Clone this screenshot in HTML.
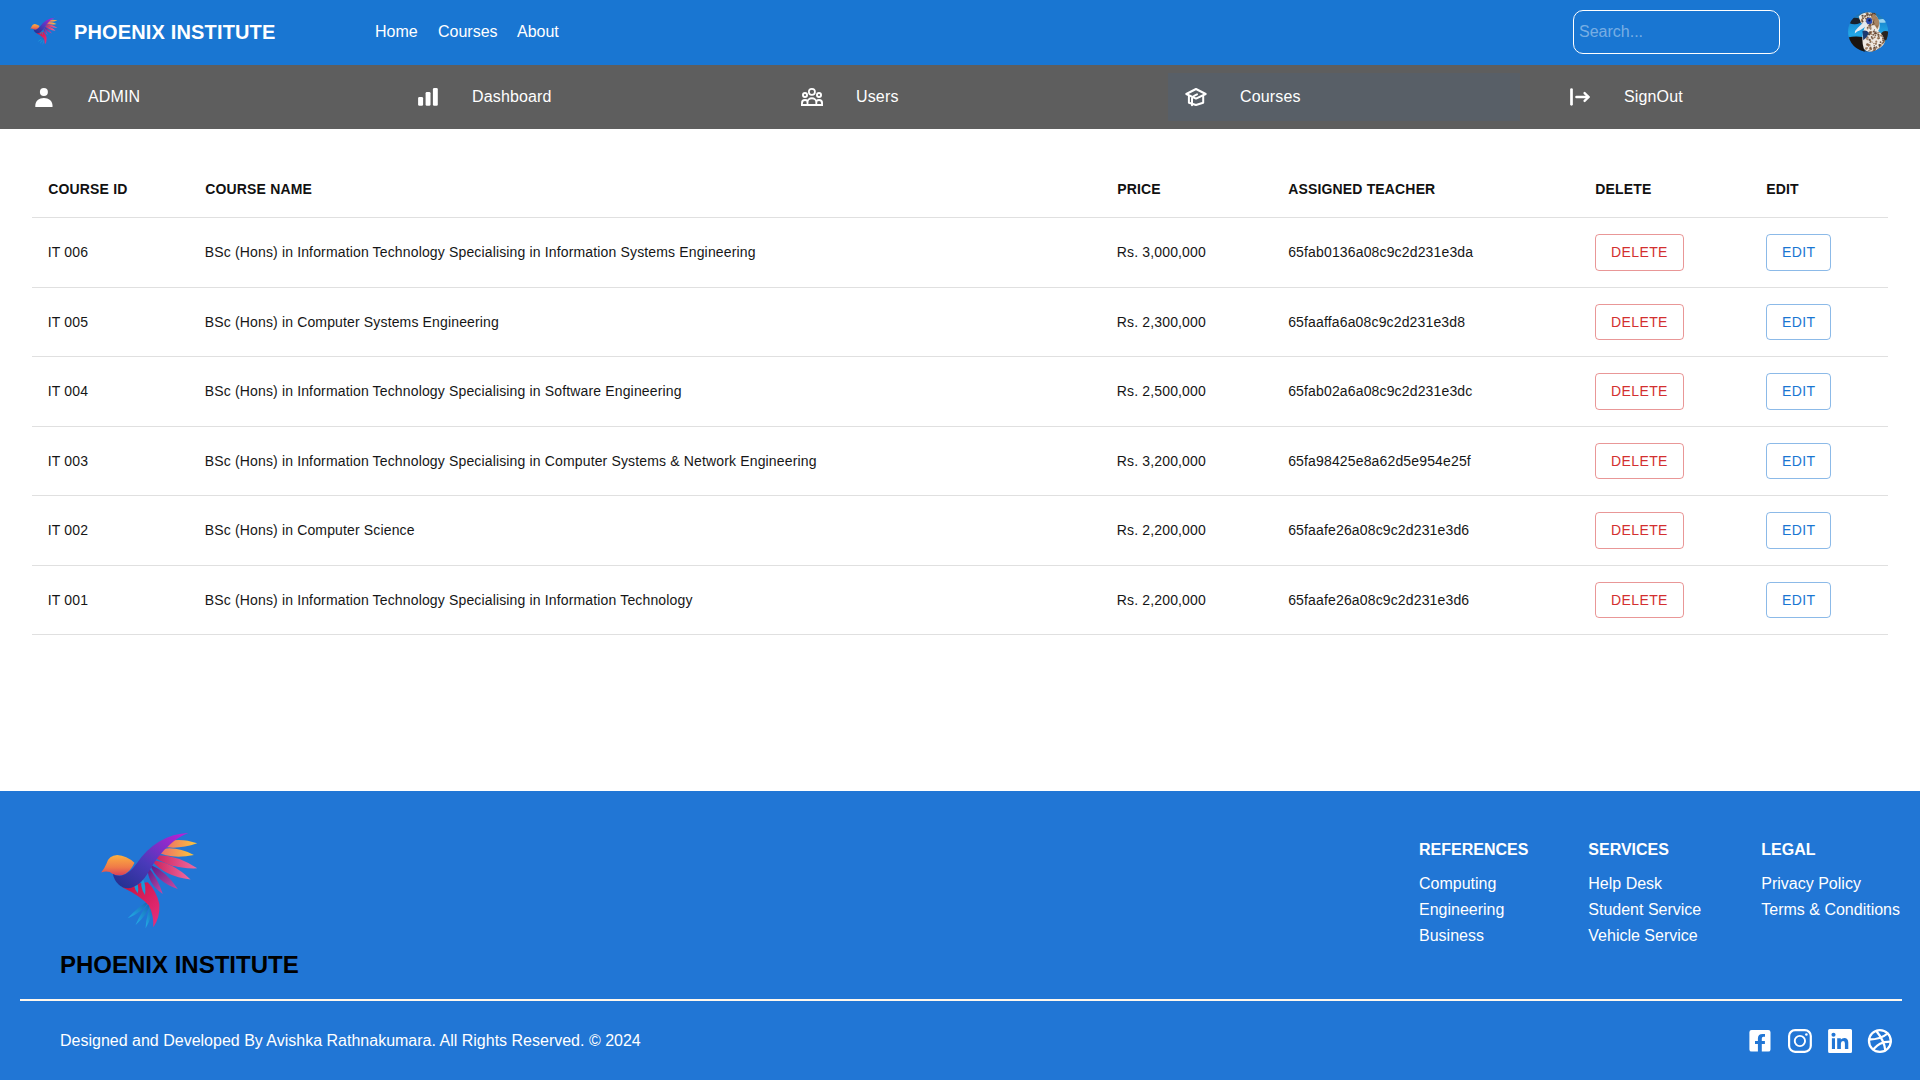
<!DOCTYPE html>
<html>
<head>
<meta charset="utf-8">
<style>
*{box-sizing:border-box;margin:0;padding:0}
html,body{width:1920px;height:1080px;overflow:hidden;background:#fff;font-family:"Liberation Sans",sans-serif;position:relative}
.abs{position:absolute;white-space:nowrap}
#hdr{position:absolute;left:0;top:0;width:1920px;height:65px;background:#1976d2}
#title{left:74px;top:17.6px;font-size:20px;font-weight:bold;color:#fff;letter-spacing:0.15px;line-height:28px}
.nav{top:23px;font-size:16px;color:#fff;line-height:18px}
#search{position:absolute;left:1573px;top:10px;width:207px;height:44px;border:1.5px solid #fff;border-radius:10px}
#search span{position:absolute;left:5px;top:11px;font-size:16px;line-height:20px;color:rgba(255,255,255,0.42)}
#bar{position:absolute;left:0;top:65px;width:1920px;height:64px;background:#5e5e5e}
.item{position:absolute;top:8px;width:352px;height:48px}
.item.sel{background:#585f67}
.item .t{position:absolute;left:72px;top:14px;font-size:16px;line-height:20px;color:#fff;letter-spacing:0.15px}
.item svg{position:absolute;left:16px;top:12px}
#tbl{position:absolute;left:32px;top:161px;width:1856px}
.row{position:relative;height:69.5px;border-bottom:1px solid #e0e0e0}
.row.h{height:57px}
.c{position:absolute;top:0;font-size:14px;letter-spacing:0.15px;color:#161616;line-height:20px;white-space:nowrap}
.h .c{font-weight:bold;line-height:24px;top:16px;color:#111}
.b .c{top:24.25px}
.btn{position:absolute;top:16px;height:36.5px;border:1px solid;border-radius:4px;font-size:14px;letter-spacing:0.4px;line-height:24px;padding:5.25px 15px;text-align:center}
.del{left:1563px;width:88.9px;color:#d32f2f;border-color:rgba(211,47,47,0.5)}
.edt{left:1734px;width:64.6px;color:#1976d2;border-color:rgba(25,118,210,0.5)}
#ftr{position:absolute;left:0;top:791px;width:1920px;height:289px;background:#2176d5}
.fh{font-size:16px;font-weight:bold;color:#fff;line-height:20px}
.fl{font-size:16px;color:#fff;line-height:20px}
</style>
</head>
<body>
<svg width="0" height="0" style="position:absolute"><symbol id="bird" viewBox="0 0 1080 1080"><defs>
<linearGradient id="gHead" x1="0" y1="0" x2="0" y2="1"><stop offset="0" stop-color="#fbb040"/><stop offset="0.6" stop-color="#f07a48"/><stop offset="1" stop-color="#d8405a"/></linearGradient>
<linearGradient id="gNeck" x1="0" y1="1" x2="1" y2="0"><stop offset="0" stop-color="#1f2f8a"/><stop offset="0.45" stop-color="#4a3aba"/><stop offset="1" stop-color="#c21fd6"/></linearGradient>
<linearGradient id="gW1" x1="0" y1="0" x2="1" y2="0"><stop offset="0" stop-color="#e85a70"/><stop offset="1" stop-color="#fcc83c"/></linearGradient>
<linearGradient id="gW2" x1="0" y1="0" x2="1" y2="0"><stop offset="0" stop-color="#c8205a"/><stop offset="1" stop-color="#f06aa0"/></linearGradient>
<linearGradient id="gW3" x1="0" y1="0" x2="1" y2="1"><stop offset="0" stop-color="#5a1a8a"/><stop offset="1" stop-color="#c84aa0"/></linearGradient>
<linearGradient id="gTail" x1="0" y1="0" x2="1" y2="1"><stop offset="0" stop-color="#c8103c"/><stop offset="1" stop-color="#e83080"/></linearGradient>
<linearGradient id="gBlue" x1="1" y1="0" x2="0" y2="1"><stop offset="0" stop-color="#1560b0"/><stop offset="1" stop-color="#22b0e8"/></linearGradient>
</defs><path fill="url(#gW3)" d="M520,420 Q511,569 655,665 Q607,516 520,420Z"/><path fill="url(#gW3)" d="M540,400 Q600,559 790,620 Q686,461 540,400Z"/><path fill="url(#gW2)" d="M550,360 Q674,511 905,535 Q741,376 550,360Z"/><path fill="url(#gW2)" d="M560,320 Q722,444 965,435 Q763,300 560,320Z"/><path fill="url(#gW1)" d="M580,280 Q733,360 935,315 Q748,216 580,280Z"/><path fill="url(#gW1)" d="M610,230 Q773,276 965,210 Q765,141 610,230Z"/><path fill="url(#gBlue)" d="M540,720 Q436,777 340,885 Q477,827 540,720Z"/><path fill="url(#gBlue)" d="M550,730 Q467,814 410,945 Q524,851 550,730Z"/><path fill="url(#gBlue)" d="M565,740 Q507,838 500,975 Q572,856 565,740Z"/><path fill="url(#gTail)" d="M290,605 Q420,570 520,560 Q600,640 625,760 Q630,880 570,965 Q575,860 530,770 Q450,680 290,605Z"/><path fill="#1a9ad8" d="M410,540 Q380,601 430,660 Q445,590 410,540Z"/><path fill="#1a9ad8" d="M470,520 Q442,596 495,675 Q509,585 470,520Z"/><path fill="url(#gHead)" d="M100,472 Q130,440 150,390 Q170,318 245,315 Q330,320 400,385 Q370,455 310,490 Q250,510 205,485 Q165,452 100,472Z"/><path fill="url(#gNeck)" d="M205,485 Q235,605 345,615 Q455,600 535,455 Q610,315 720,220 Q800,150 885,118 Q750,122 620,195 Q505,265 425,385 Q355,485 285,500 Q235,505 205,485Z"/></symbol></svg>
<div id="hdr">
  <svg class="abs" style="left:27px;top:14px" width="34" height="34"><use href="#bird" width="34" height="34"/></svg>
  <div id="title" class="abs">PHOENIX INSTITUTE</div>
  <div class="abs nav" style="left:375px">Home</div>
  <div class="abs nav" style="left:438px">Courses</div>
  <div class="abs nav" style="left:517px">About</div>
  <div id="search"><span>Search...</span></div>
  <svg class="abs" style="left:1843px;top:7px" width="50" height="50" viewBox="0 0 1080 1080">
<defs><clipPath id="av"><circle cx="542" cy="535" r="433"/></clipPath>
<linearGradient id="avbg" x1="0" y1="0" x2="0" y2="1"><stop offset="0" stop-color="#2a5a8a"/><stop offset="0.3" stop-color="#1a8ad0"/><stop offset="0.55" stop-color="#22a8e8"/><stop offset="0.75" stop-color="#1a70b0"/><stop offset="1" stop-color="#2a3a50"/></linearGradient>
</defs>
<g clip-path="url(#av)">
<rect x="0" y="0" width="1080" height="1080" fill="url(#avbg)"/>
<ellipse cx="250" cy="300" rx="150" ry="70" fill="#18202c"/>
<ellipse cx="850" cy="300" rx="90" ry="40" fill="#9ad4f0"/>
<ellipse cx="920" cy="620" rx="110" ry="100" fill="#2a2420"/>
<path d="M100,660 Q260,620 420,650 Q470,800 470,1000 L100,1000Z" fill="#1a1410"/>
<path d="M340,200 Q430,100 600,120 Q770,160 790,380 Q800,470 760,520 Q880,600 900,760 Q880,930 700,980 Q520,990 450,900 Q400,760 430,560 Q450,480 470,430 Q360,330 340,200Z" fill="#efe9e2"/>
<path d="M580,130 Q740,160 780,300 Q790,420 740,480 Q660,380 620,250Z" fill="#a88462"/>
<circle cx="555" cy="241" r="21" fill="#6a4a30" opacity="0.85"/><circle cx="695" cy="901" r="15" fill="#6a4a30" opacity="0.85"/><circle cx="614" cy="171" r="13" fill="#a07a58" opacity="0.85"/><circle cx="695" cy="164" r="20" fill="#6a4a30" opacity="0.85"/><circle cx="458" cy="212" r="16" fill="#8a6446" opacity="0.85"/><circle cx="481" cy="195" r="22" fill="#5a3a28" opacity="0.85"/><circle cx="412" cy="289" r="22" fill="#a07a58" opacity="0.85"/><circle cx="514" cy="266" r="23" fill="#6a4a30" opacity="0.85"/><circle cx="690" cy="567" r="24" fill="#a07a58" opacity="0.85"/><circle cx="644" cy="144" r="21" fill="#5a3a28" opacity="0.85"/><circle cx="689" cy="872" r="16" fill="#3a2a20" opacity="0.85"/><circle cx="701" cy="615" r="18" fill="#6a4a30" opacity="0.85"/><circle cx="759" cy="673" r="26" fill="#a07a58" opacity="0.85"/><circle cx="534" cy="446" r="21" fill="#6a4a30" opacity="0.85"/><circle cx="710" cy="540" r="15" fill="#3a2a20" opacity="0.85"/><circle cx="450" cy="325" r="17" fill="#a07a58" opacity="0.85"/><circle cx="677" cy="879" r="23" fill="#5a3a28" opacity="0.85"/><circle cx="530" cy="471" r="17" fill="#a07a58" opacity="0.85"/><circle cx="475" cy="312" r="15" fill="#a07a58" opacity="0.85"/><circle cx="532" cy="237" r="19" fill="#5a3a28" opacity="0.85"/><circle cx="686" cy="939" r="22" fill="#5a3a28" opacity="0.85"/><circle cx="748" cy="597" r="18" fill="#a07a58" opacity="0.85"/><circle cx="493" cy="251" r="17" fill="#6a4a30" opacity="0.85"/><circle cx="670" cy="936" r="21" fill="#6a4a30" opacity="0.85"/><circle cx="852" cy="644" r="14" fill="#3a2a20" opacity="0.85"/><circle cx="636" cy="210" r="19" fill="#a07a58" opacity="0.85"/><circle cx="639" cy="381" r="14" fill="#3a2a20" opacity="0.85"/><circle cx="754" cy="559" r="15" fill="#5a3a28" opacity="0.85"/><circle cx="575" cy="710" r="25" fill="#5a3a28" opacity="0.85"/><circle cx="541" cy="669" r="13" fill="#3a2a20" opacity="0.85"/><circle cx="660" cy="900" r="17" fill="#8a6446" opacity="0.85"/><circle cx="668" cy="788" r="17" fill="#8a6446" opacity="0.85"/><circle cx="711" cy="796" r="23" fill="#8a6446" opacity="0.85"/><circle cx="815" cy="822" r="22" fill="#8a6446" opacity="0.85"/><circle cx="485" cy="636" r="17" fill="#3a2a20" opacity="0.85"/><circle cx="499" cy="307" r="15" fill="#8a6446" opacity="0.85"/><circle cx="641" cy="967" r="21" fill="#6a4a30" opacity="0.85"/><circle cx="639" cy="678" r="23" fill="#6a4a30" opacity="0.85"/><circle cx="590" cy="729" r="15" fill="#8a6446" opacity="0.85"/><circle cx="614" cy="663" r="13" fill="#a07a58" opacity="0.85"/><circle cx="630" cy="757" r="13" fill="#8a6446" opacity="0.85"/><circle cx="472" cy="221" r="14" fill="#a07a58" opacity="0.85"/><circle cx="735" cy="415" r="20" fill="#8a6446" opacity="0.85"/><circle cx="674" cy="836" r="13" fill="#3a2a20" opacity="0.85"/><circle cx="865" cy="686" r="23" fill="#5a3a28" opacity="0.85"/><circle cx="607" cy="908" r="19" fill="#5a3a28" opacity="0.85"/><circle cx="851" cy="786" r="21" fill="#8a6446" opacity="0.85"/><circle cx="772" cy="594" r="17" fill="#5a3a28" opacity="0.85"/><circle cx="667" cy="530" r="23" fill="#5a3a28" opacity="0.85"/><circle cx="411" cy="276" r="13" fill="#6a4a30" opacity="0.85"/><circle cx="654" cy="599" r="23" fill="#6a4a30" opacity="0.85"/><circle cx="619" cy="643" r="19" fill="#5a3a28" opacity="0.85"/><circle cx="488" cy="351" r="19" fill="#a07a58" opacity="0.85"/><circle cx="654" cy="325" r="19" fill="#3a2a20" opacity="0.85"/><circle cx="605" cy="451" r="16" fill="#8a6446" opacity="0.85"/><circle cx="611" cy="295" r="16" fill="#6a4a30" opacity="0.85"/><circle cx="767" cy="684" r="14" fill="#8a6446" opacity="0.85"/><circle cx="643" cy="971" r="24" fill="#8a6446" opacity="0.85"/><circle cx="598" cy="477" r="17" fill="#6a4a30" opacity="0.85"/><circle cx="679" cy="493" r="12" fill="#3a2a20" opacity="0.85"/><circle cx="659" cy="367" r="25" fill="#6a4a30" opacity="0.85"/><circle cx="523" cy="144" r="23" fill="#3a2a20" opacity="0.85"/><circle cx="788" cy="823" r="24" fill="#3a2a20" opacity="0.85"/><circle cx="599" cy="577" r="19" fill="#a07a58" opacity="0.85"/><circle cx="610" cy="173" r="25" fill="#6a4a30" opacity="0.85"/><circle cx="563" cy="591" r="25" fill="#3a2a20" opacity="0.85"/><circle cx="763" cy="926" r="26" fill="#3a2a20" opacity="0.85"/><circle cx="407" cy="286" r="16" fill="#3a2a20" opacity="0.85"/><circle cx="667" cy="289" r="18" fill="#8a6446" opacity="0.85"/><circle cx="526" cy="809" r="26" fill="#6a4a30" opacity="0.85"/><circle cx="678" cy="275" r="19" fill="#a07a58" opacity="0.85"/><circle cx="613" cy="541" r="24" fill="#a07a58" opacity="0.85"/><circle cx="496" cy="310" r="15" fill="#8a6446" opacity="0.85"/><circle cx="599" cy="412" r="13" fill="#8a6446" opacity="0.85"/><circle cx="586" cy="550" r="26" fill="#5a3a28" opacity="0.85"/><circle cx="511" cy="365" r="18" fill="#8a6446" opacity="0.85"/><circle cx="577" cy="396" r="26" fill="#3a2a20" opacity="0.85"/><circle cx="547" cy="420" r="12" fill="#a07a58" opacity="0.85"/><circle cx="425" cy="353" r="21" fill="#8a6446" opacity="0.85"/><circle cx="523" cy="188" r="18" fill="#6a4a30" opacity="0.85"/><circle cx="593" cy="371" r="21" fill="#6a4a30" opacity="0.85"/><circle cx="696" cy="570" r="23" fill="#5a3a28" opacity="0.85"/><circle cx="590" cy="394" r="26" fill="#8a6446" opacity="0.85"/><circle cx="533" cy="648" r="14" fill="#5a3a28" opacity="0.85"/><circle cx="719" cy="748" r="23" fill="#8a6446" opacity="0.85"/><circle cx="871" cy="765" r="20" fill="#6a4a30" opacity="0.85"/><circle cx="826" cy="618" r="24" fill="#8a6446" opacity="0.85"/><circle cx="724" cy="945" r="17" fill="#a07a58" opacity="0.85"/><circle cx="682" cy="656" r="21" fill="#8a6446" opacity="0.85"/><circle cx="811" cy="761" r="19" fill="#5a3a28" opacity="0.85"/><circle cx="817" cy="846" r="15" fill="#8a6446" opacity="0.85"/><circle cx="505" cy="675" r="18" fill="#a07a58" opacity="0.85"/><circle cx="535" cy="151" r="21" fill="#8a6446" opacity="0.85"/><circle cx="422" cy="238" r="16" fill="#3a2a20" opacity="0.85"/><circle cx="715" cy="226" r="19" fill="#a07a58" opacity="0.85"/><circle cx="525" cy="695" r="22" fill="#a07a58" opacity="0.85"/><circle cx="537" cy="559" r="19" fill="#a07a58" opacity="0.85"/><circle cx="677" cy="381" r="13" fill="#a07a58" opacity="0.85"/><circle cx="623" cy="344" r="15" fill="#8a6446" opacity="0.85"/><circle cx="420" cy="189" r="22" fill="#3a2a20" opacity="0.85"/><circle cx="859" cy="722" r="15" fill="#a07a58" opacity="0.85"/><circle cx="593" cy="248" r="25" fill="#a07a58" opacity="0.85"/><circle cx="599" cy="743" r="18" fill="#a07a58" opacity="0.85"/><circle cx="551" cy="841" r="12" fill="#3a2a20" opacity="0.85"/><circle cx="880" cy="730" r="25" fill="#3a2a20" opacity="0.85"/><circle cx="517" cy="167" r="17" fill="#5a3a28" opacity="0.85"/><circle cx="788" cy="853" r="16" fill="#6a4a30" opacity="0.85"/><circle cx="523" cy="555" r="15" fill="#3a2a20" opacity="0.85"/><circle cx="596" cy="872" r="20" fill="#8a6446" opacity="0.85"/><circle cx="786" cy="671" r="16" fill="#6a4a30" opacity="0.85"/><circle cx="532" cy="332" r="22" fill="#3a2a20" opacity="0.85"/><circle cx="599" cy="318" r="19" fill="#a07a58" opacity="0.85"/><circle cx="445" cy="670" r="13" fill="#5a3a28" opacity="0.85"/><circle cx="499" cy="898" r="26" fill="#a07a58" opacity="0.85"/><circle cx="611" cy="587" r="15" fill="#8a6446" opacity="0.85"/><circle cx="565" cy="189" r="15" fill="#3a2a20" opacity="0.85"/><circle cx="587" cy="759" r="15" fill="#3a2a20" opacity="0.85"/><circle cx="563" cy="164" r="16" fill="#3a2a20" opacity="0.85"/><circle cx="720" cy="861" r="15" fill="#3a2a20" opacity="0.85"/><circle cx="548" cy="818" r="26" fill="#8a6446" opacity="0.85"/><circle cx="591" cy="916" r="24" fill="#a07a58" opacity="0.85"/><circle cx="439" cy="244" r="19" fill="#6a4a30" opacity="0.85"/><circle cx="888" cy="738" r="21" fill="#a07a58" opacity="0.85"/><circle cx="687" cy="143" r="22" fill="#8a6446" opacity="0.85"/><circle cx="718" cy="570" r="18" fill="#6a4a30" opacity="0.85"/><circle cx="434" cy="371" r="25" fill="#8a6446" opacity="0.85"/><circle cx="590" cy="305" r="20" fill="#6a4a30" opacity="0.85"/><circle cx="670" cy="977" r="16" fill="#3a2a20" opacity="0.85"/><circle cx="728" cy="879" r="19" fill="#8a6446" opacity="0.85"/><circle cx="675" cy="135" r="18" fill="#3a2a20" opacity="0.85"/><circle cx="410" cy="279" r="24" fill="#a07a58" opacity="0.85"/><circle cx="424" cy="308" r="18" fill="#3a2a20" opacity="0.85"/><circle cx="502" cy="140" r="17" fill="#a07a58" opacity="0.85"/><circle cx="576" cy="455" r="12" fill="#3a2a20" opacity="0.85"/><circle cx="779" cy="549" r="15" fill="#8a6446" opacity="0.85"/><circle cx="548" cy="823" r="15" fill="#8a6446" opacity="0.85"/><circle cx="523" cy="884" r="14" fill="#5a3a28" opacity="0.85"/><circle cx="648" cy="273" r="15" fill="#a07a58" opacity="0.85"/><circle cx="701" cy="912" r="13" fill="#6a4a30" opacity="0.85"/><circle cx="592" cy="891" r="24" fill="#6a4a30" opacity="0.85"/><circle cx="558" cy="271" r="25" fill="#a07a58" opacity="0.85"/><circle cx="584" cy="435" r="17" fill="#8a6446" opacity="0.85"/><circle cx="439" cy="178" r="13" fill="#a07a58" opacity="0.85"/><circle cx="573" cy="825" r="24" fill="#a07a58" opacity="0.85"/><circle cx="486" cy="581" r="18" fill="#3a2a20" opacity="0.85"/><circle cx="577" cy="890" r="12" fill="#a07a58" opacity="0.85"/><circle cx="514" cy="654" r="18" fill="#a07a58" opacity="0.85"/><circle cx="784" cy="892" r="17" fill="#3a2a20" opacity="0.85"/><circle cx="561" cy="940" r="13" fill="#3a2a20" opacity="0.85"/><circle cx="770" cy="628" r="23" fill="#6a4a30" opacity="0.85"/><circle cx="393" cy="313" r="19" fill="#a07a58" opacity="0.85"/>
<ellipse cx="565" cy="300" rx="65" ry="70" fill="#2848b0"/>
<ellipse cx="570" cy="290" rx="25" ry="25" fill="#101830"/>
<path d="M470,290 Q400,380 320,450 Q250,510 255,570 Q300,520 370,500 Q460,450 530,370Z" fill="#e4eaf0"/>
<path d="M420,520 Q500,480 560,560 Q520,660 440,720Z" fill="#1c3a70"/>
</g>
</svg>
</div>
<div id="bar">
  <div class="item" style="left:16px"><span class="t">ADMIN</span></div>
  <div class="item" style="left:400px"><span class="t">Dashboard</span></div>
  <div class="item" style="left:784px"><span class="t">Users</span></div>
  <div class="item sel" style="left:1168px"><span class="t">Courses</span></div>
  <div class="item" style="left:1552px"><span class="t">SignOut</span></div>
<svg style="position:absolute;left:0;top:0" width="1920" height="64" viewBox="0 65 1920 64" fill="#fff">
<circle cx="43.9" cy="92.1" r="4"/><path d="M35.3,107 V105.5 C35.3,101 39,97.9 43.9,97.9 C48.8,97.9 52.5,101 52.5,105.5 V107 Z"/>
<rect x="418.1" y="96.9" width="5" height="8.9" rx="1.3"/><rect x="425.6" y="92" width="4.9" height="13.8" rx="1.3"/><rect x="432.9" y="88.1" width="4.9" height="17.7" rx="1.3"/>
<g>
<circle cx="811.9" cy="91.8" r="3.05" fill="none" stroke="#fff" stroke-width="1.75"/>
<circle cx="805" cy="95" r="2.05" fill="none" stroke="#fff" stroke-width="1.9"/>
<circle cx="819" cy="95" r="2.05" fill="none" stroke="#fff" stroke-width="1.9"/>
<path d="M801,106 V103.2 A4,4.1 0 0 1 809,103.2 V106Z"/><path fill="#5e5e5e" d="M802.9,104 V103.2 A2.1,2.2 0 0 1 807.1,103.2 V104Z"/>
<path d="M815,106 V103.2 A4,4.1 0 0 1 823,103.2 V106Z"/><path fill="#5e5e5e" d="M816.9,104 V103.2 A2.1,2.2 0 0 1 821.1,103.2 V104Z"/>
<path d="M806.6,106 V102.2 A5.3,5 0 0 1 817.2,102.2 V106Z"/><path fill="#5e5e5e" d="M808.4,104 V102.6 A3.5,3.3 0 0 1 815.4,102.6 V104Z"/>
<rect x="801" y="104" width="22" height="2"/>
</g>
<g fill="none" stroke="#fff" stroke-width="2" stroke-linejoin="round" stroke-linecap="round">
<path d="M1196,89 L1186.3,94 L1196,98.6 L1205.7,94 Z"/>
<path d="M1188.9,96.3 V102.7 L1196,105 L1203.2,102.7 V96.3"/>
<path d="M1197,94.3 Q1192,96.5 1192,98.5 V105.3"/>
</g>
<g fill="none" stroke="#fff" stroke-linecap="round" stroke-linejoin="round">
<path d="M1571.5,89.6 V104.3" stroke-width="2.7"/>
<path d="M1576.4,97 H1588.3" stroke-width="2.4"/>
<path d="M1584.6,93.1 L1588.6,97 L1584.6,100.9" stroke-width="2.4"/>
</g>
</svg>
</div>
<div id="tbl">
<div class="row h"><div class="c" style="left:16.3px">COURSE ID</div><div class="c" style="left:173.3px">COURSE NAME</div><div class="c" style="left:1085.3px">PRICE</div><div class="c" style="left:1256.3px">ASSIGNED TEACHER</div><div class="c" style="left:1563.3px">DELETE</div><div class="c" style="left:1734.3px">EDIT</div></div>
<div class="row b"><div class="c" style="left:15.8px">IT 006</div><div class="c" style="left:172.8px">BSc (Hons) in Information Technology Specialising in Information Systems Engineering</div><div class="c" style="left:1084.8px">Rs. 3,000,000</div><div class="c" style="left:1256.2px">65fab0136a08c9c2d231e3da</div><div class="btn del">DELETE</div><div class="btn edt">EDIT</div></div>
<div class="row b"><div class="c" style="left:15.8px">IT 005</div><div class="c" style="left:172.8px">BSc (Hons) in Computer Systems Engineering</div><div class="c" style="left:1084.8px">Rs. 2,300,000</div><div class="c" style="left:1256.2px">65faaffa6a08c9c2d231e3d8</div><div class="btn del">DELETE</div><div class="btn edt">EDIT</div></div>
<div class="row b"><div class="c" style="left:15.8px">IT 004</div><div class="c" style="left:172.8px">BSc (Hons) in Information Technology Specialising in Software Engineering</div><div class="c" style="left:1084.8px">Rs. 2,500,000</div><div class="c" style="left:1256.2px">65fab02a6a08c9c2d231e3dc</div><div class="btn del">DELETE</div><div class="btn edt">EDIT</div></div>
<div class="row b"><div class="c" style="left:15.8px">IT 003</div><div class="c" style="left:172.8px">BSc (Hons) in Information Technology Specialising in Computer Systems &amp; Network Engineering</div><div class="c" style="left:1084.8px">Rs. 3,200,000</div><div class="c" style="left:1256.2px">65fa98425e8a62d5e954e25f</div><div class="btn del">DELETE</div><div class="btn edt">EDIT</div></div>
<div class="row b"><div class="c" style="left:15.8px">IT 002</div><div class="c" style="left:172.8px">BSc (Hons) in Computer Science</div><div class="c" style="left:1084.8px">Rs. 2,200,000</div><div class="c" style="left:1256.2px">65faafe26a08c9c2d231e3d6</div><div class="btn del">DELETE</div><div class="btn edt">EDIT</div></div>
<div class="row b"><div class="c" style="left:15.8px">IT 001</div><div class="c" style="left:172.8px">BSc (Hons) in Information Technology Specialising in Information Technology</div><div class="c" style="left:1084.8px">Rs. 2,200,000</div><div class="c" style="left:1256.2px">65faafe26a08c9c2d231e3d6</div><div class="btn del">DELETE</div><div class="btn edt">EDIT</div></div>
</div>
<div id="ftr">
  <svg class="abs" style="left:90px;top:29px" width="120" height="120"><use href="#bird" width="120" height="120"/></svg>
  <div class="abs" style="left:60px;top:160px;font-size:24px;font-weight:bold;color:#000;line-height:28px">PHOENIX INSTITUTE</div>
  <div class="abs fh" style="left:1419px;top:49px">REFERENCES</div>
  <div class="abs fl" style="left:1419px;top:83px">Computing</div>
  <div class="abs fl" style="left:1419px;top:109px">Engineering</div>
  <div class="abs fl" style="left:1419px;top:135px">Business</div>
  <div class="abs fh" style="left:1588.3px;top:49px">SERVICES</div>
  <div class="abs fl" style="left:1588.3px;top:83px">Help Desk</div>
  <div class="abs fl" style="left:1588.3px;top:109px">Student Service</div>
  <div class="abs fl" style="left:1588.3px;top:135px">Vehicle Service</div>
  <div class="abs fh" style="left:1761.3px;top:49px">LEGAL</div>
  <div class="abs fl" style="left:1761.3px;top:83px">Privacy Policy</div>
  <div class="abs fl" style="left:1761.3px;top:109px">Terms &amp; Conditions</div>
  <div class="abs" style="left:20px;top:208px;width:1882px;height:2px;background:#fff8ee"></div>
  <div class="abs fl" style="left:60px;top:240px">Designed and Developed By Avishka Rathnakumara. All Rights Reserved. © 2024</div>
  <svg class="abs" style="left:1740px;top:229px" width="160" height="40" viewBox="1740 1020 160 40">
    <path fill="#fff" d="M1751.6,1030.1 H1768.3 A2.2,2.2 0 0 1 1770.5,1032.3 V1049.4 A2.2,2.2 0 0 1 1768.3,1051.6 H1761.8 V1044 H1764.9 V1041 H1761.8 V1038.6 Q1761.8,1036.7 1763.3,1036.7 H1765 V1034.1 H1762.6 Q1757.9,1034.1 1757.9,1038.4 V1041 H1755 V1044 H1757.9 V1051.6 H1751.6 A2.2,2.2 0 0 1 1749.4,1049.4 V1032.3 A2.2,2.2 0 0 1 1751.6,1030.1 Z"/>
    <rect x="1789.1" y="1030.1" width="21.7" height="21.7" rx="6" fill="none" stroke="#fff" stroke-width="2.2"/>
    <circle cx="1799.9" cy="1041" r="5.15" fill="none" stroke="#fff" stroke-width="1.9"/>
    <circle cx="1806.4" cy="1034.5" r="1.3" fill="#fff"/>
    <path fill="#fff" fill-rule="evenodd" d="M1829.6,1029 H1850.5 A1.5,1.5 0 0 1 1852,1030.5 V1051.4 A1.5,1.5 0 0 1 1850.5,1052.9 H1829.6 A1.5,1.5 0 0 1 1828.1,1051.4 V1030.5 A1.5,1.5 0 0 1 1829.6,1029 Z M1831.9,1038.3 H1835 V1048.9 H1831.9 Z M1837.2,1038.3 H1840.8 V1039.6 Q1842,1038.1 1844.3,1038.1 Q1848.3,1038.1 1848.3,1042.8 V1048.9 H1844.9 V1043.3 Q1844.9,1041 1843,1041 Q1840.9,1041 1840.9,1043.5 V1048.9 H1837.2 Z"/>
    <circle cx="1833.5" cy="1034.8" r="2.05" fill="#2176d5"/>
    <g fill="none" stroke="#fff" stroke-width="1.9" stroke-linecap="round" transform="translate(1865.5,1026.6) scale(1.2)">
      <circle cx="12" cy="12" r="9.1"/>
      <path d="M9 3.6c5 6 7 10.5 7.5 16.2"/><path d="M6.4 19c3.5-3.5 6-6.5 14.5-6.4"/><path d="M3.1 10.75c5 0 9.814-.38 15.314-5"/>
    </g>
  </svg>
</div>
</body>
</html>
